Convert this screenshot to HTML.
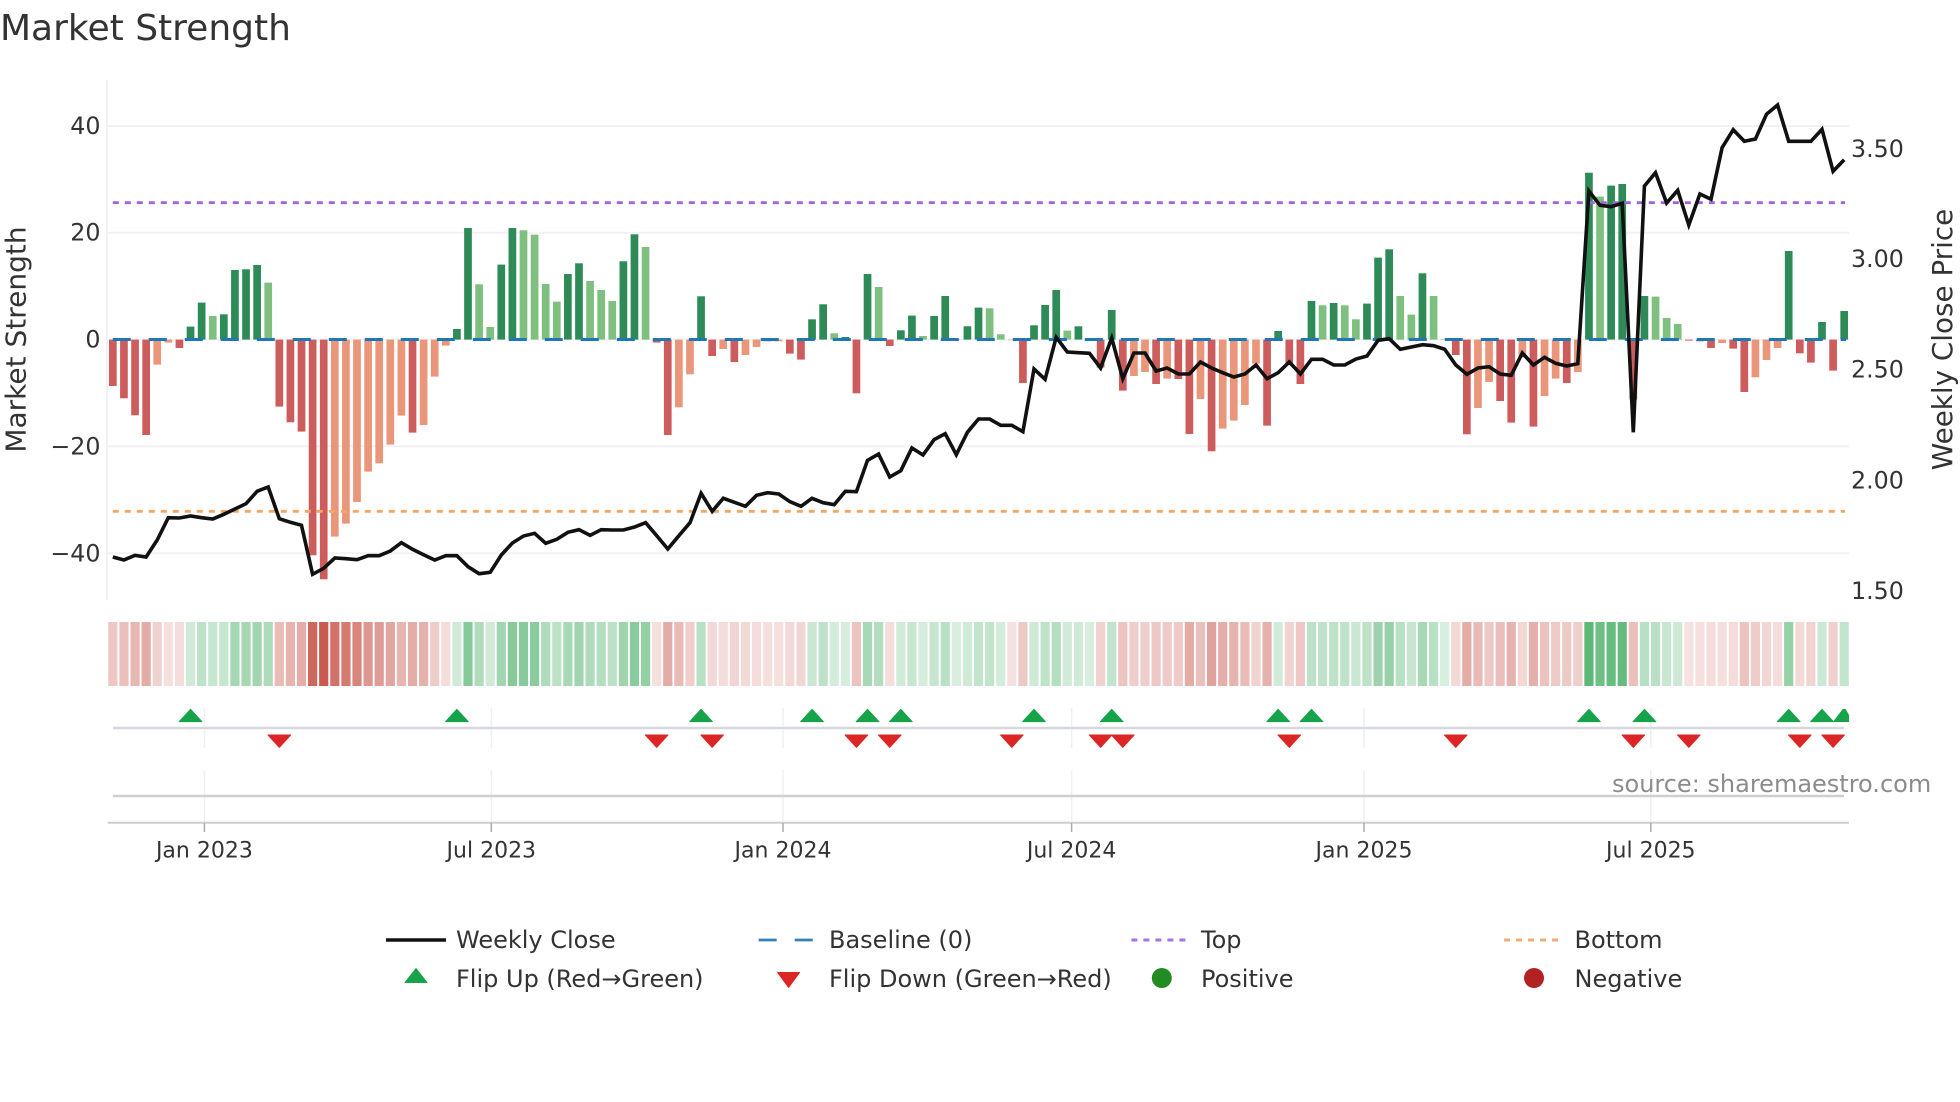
<!DOCTYPE html>
<html lang="en">
<head>
<meta charset="utf-8">
<title>Market Strength</title>
<style>
html,body{margin:0;padding:0;background:#fff;width:1960px;height:1102px;overflow:hidden}
svg{display:block}
text{font-family:"DejaVu Sans","Liberation Sans",sans-serif;fill:#333}
</style>
</head>
<body>
<svg xmlns="http://www.w3.org/2000/svg" width="1960" height="1102" viewBox="0 0 1960 1102">
<rect width="1960" height="1102" fill="#fff"/>
<text x="0" y="40" font-size="36">Market Strength</text>

<g stroke="#f1f2f5" stroke-width="2">
<line x1="107" y1="80" x2="107" y2="600"/>
<line x1="108" y1="126" x2="1849" y2="126"/>
<line x1="108" y1="232.7" x2="1849" y2="232.7"/>
<line x1="108" y1="339.5" x2="1849" y2="339.5"/>
<line x1="108" y1="446.3" x2="1849" y2="446.3"/>
<line x1="108" y1="553.3" x2="1849" y2="553.3"/>
</g>

<g id="bars"></g>

<line x1="112.8" y1="339.5" x2="1846" y2="339.5" stroke="#1f77b4" stroke-width="3" stroke-dasharray="18 18"/>
<line x1="112.8" y1="202.7" x2="1845" y2="202.7" stroke="#a066dd" stroke-width="2.8" stroke-dasharray="6 6"/>
<line x1="112.8" y1="511.3" x2="1845" y2="511.3" stroke="#f2a765" stroke-width="2.8" stroke-dasharray="6 6"/>
<polyline id="close" fill="none" stroke="#111" stroke-width="3.6" stroke-linejoin="miter" points=""/>

<g font-size="23.75" text-anchor="end">
<text x="100.5" y="134">40</text>
<text x="100.5" y="240.7">20</text>
<text x="100.5" y="347.5">0</text>
<text x="100.5" y="454.3">−20</text>
<text x="100.5" y="561.5">−40</text>
</g>
<g font-size="23.75">
<text x="1851" y="156.8">3.50</text>
<text x="1851" y="267">3.00</text>
<text x="1851" y="377.5">2.50</text>
<text x="1851" y="488.5">2.00</text>
<text x="1851" y="599.2">1.50</text>
</g>
<text transform="translate(25.5 339.5) rotate(-90)" font-size="28" text-anchor="middle">Market Strength</text>
<text transform="translate(1952.2 339.5) rotate(-90)" font-size="27.8" text-anchor="middle">Weekly Close Price</text>

<g id="heat"></g>

<g stroke="#eef0f5" stroke-width="1.5">
<line x1="204.4" y1="708" x2="204.4" y2="748"/><line x1="204.4" y1="770" x2="204.4" y2="822"/>
<line x1="491.3" y1="708" x2="491.3" y2="748"/><line x1="491.3" y1="770" x2="491.3" y2="822"/>
<line x1="783" y1="708" x2="783" y2="748"/><line x1="783" y1="770" x2="783" y2="822"/>
<line x1="1071.6" y1="708" x2="1071.6" y2="748"/><line x1="1071.6" y1="770" x2="1071.6" y2="822"/>
<line x1="1364" y1="708" x2="1364" y2="748"/><line x1="1364" y1="770" x2="1364" y2="822"/>
<line x1="1650.8" y1="708" x2="1650.8" y2="748"/><line x1="1650.8" y1="770" x2="1650.8" y2="822"/>
</g>
<line x1="112.8" y1="728" x2="1844" y2="728" stroke="#d6d8de" stroke-width="2.4"/>
<line x1="112.8" y1="796" x2="1844" y2="796" stroke="#cfcfcf" stroke-width="2.4"/>
<line x1="107.8" y1="822.7" x2="1849" y2="822.7" stroke="#cdcdcd" stroke-width="2"/>
<g stroke="#aaa" stroke-width="1.5">
<line x1="204.4" y1="823" x2="204.4" y2="832"/>
<line x1="491.3" y1="823" x2="491.3" y2="832"/>
<line x1="783" y1="823" x2="783" y2="832"/>
<line x1="1071.6" y1="823" x2="1071.6" y2="832"/>
<line x1="1364" y1="823" x2="1364" y2="832"/>
<line x1="1650.8" y1="823" x2="1650.8" y2="832"/>
</g>
<g id="flips"></g>

<text x="1612" y="792" font-size="24" style="fill:#8c8c8c">source: sharemaestro.com</text>

<g font-size="22" text-anchor="middle">
<text x="204.4" y="857.5">Jan 2023</text>
<text x="491.3" y="857.5">Jul 2023</text>
<text x="783" y="857.5">Jan 2024</text>
<text x="1071.6" y="857.5">Jul 2024</text>
<text x="1364" y="857.5">Jan 2025</text>
<text x="1650.8" y="857.5">Jul 2025</text>
</g>

<line x1="386" y1="940" x2="446" y2="940" stroke="#111" stroke-width="3.6"/>
<line x1="758.7" y1="940" x2="813" y2="940" stroke="#3581b5" stroke-width="2.8" stroke-dasharray="18 18"/>
<line x1="1131.4" y1="940" x2="1186" y2="940" stroke="#a873e2" stroke-width="3" stroke-dasharray="6 6"/>
<line x1="1504" y1="940" x2="1558.6" y2="940" stroke="#f0ad78" stroke-width="3" stroke-dasharray="6 6"/>
<polygon points="416,968.5 427,982.5 405,982.5" fill="#16a34a" stroke="#16a34a" stroke-linejoin="round"/>
<polygon points="777.6,972.5 799.6,972.5 788.6,987.5" fill="#dc2626" stroke="#dc2626" stroke-linejoin="round"/>
<circle cx="1161.8" cy="978" r="10" fill="#228b22"/>
<circle cx="1534" cy="978" r="10" fill="#b22222"/>
<g font-size="24">
<text x="456" y="948">Weekly Close</text>
<text x="829" y="948">Baseline (0)</text>
<text x="1201" y="948">Top</text>
<text x="1574.5" y="948">Bottom</text>
<text x="456" y="987">Flip Up (Red→Green)</text>
<text x="829" y="987">Flip Down (Green→Red)</text>
<text x="1201" y="987">Positive</text>
<text x="1574.5" y="987">Negative</text>
</g>
</svg>
<script>
(function(){
var T="R46.4 R58.7 R75.7 R95.4 O25 O3 R8.4 D13 D37 L23.6 D25.3 D69.6 D70.3 D74.6 L57 R67 R82.7 R92 R215.7 R239.7 O197 O184 O162.4 O132 O123.7 O105 O76 R93 O85.4 O37 O6 D10.6 D111.6 L55.3 L12.6 D75 D111.6 L109.3 L104.9 L55.6 L38 D65.6 D76.3 L58.6 L49.6 L38.6 D78.3 D105.3 L92.6 R3 R95.4 O67.7 O34.7 D43.3 R16.4 O9.4 R22.4 O15.4 O7.4 R1.7 O1.7 R14 R20 D20.3 D35.3 L6.3 D2.6 R53.7 D65.6 L52.6 R6.4 D9.3 D24 L3.6 D23.6 D43.6 L0.5 D13.3 D32 L31.3 L5.3 O0.5 R43.4 D14.3 D34.6 D49.6 L9 D13.3 L0.5 R28 D29.6 R51 O36.4 O32.4 R44.4 O39 R39.4 R94.4 O59.4 R111.7 O89 O81 O65.4 O24 R86 D8.6 R24 R44.4 D38.6 L34.3 D36.6 L34.3 L20.3 D36 D82 D90.3 L43.6 L25 D66.3 L43.6 L0.5 R15.4 R94.7 O68.4 O42.4 R61.4 R83 O18 R87 O56.4 O39 R43.4 O32.4 D166.9 L143 D154 D155.6 R60 D43.6 L43 L21.6 L15.6 R1 R1.7 R8.4 O3.4 R9 R52.4 O37.7 O20.4 O8.4 D88.6 R13.7 R23 D17.6 R31 D28.6".split(" ");
var C=[557,560,555.3,557,540,517.7,518,516,517.7,519,514.3,509,503.7,491.3,487,518.7,522.3,525.3,574.3,568.3,558,558.7,559.7,555.7,555.7,551,542.7,549.3,554.7,560,555.7,555.7,566.7,573.7,572.3,555,543,536,533.3,543.3,539.3,532.3,529.7,535.3,529.7,530,530,527,522.7,535.7,549,535.7,522.7,493.3,511.3,498.3,502.3,506.3,495.3,492.7,494,501.7,506.3,498.3,502.7,504.7,491.3,491.7,460.3,454,477,470.7,448,455,439.7,433.7,454.7,432.3,419,419,425.3,425.3,431.7,369,379.3,337.3,352,352.7,353.3,368,338,378.7,353,353,371,368,374,374,362,368,372.7,377,374,365,378.7,372.7,362,374,359.3,359.3,365,365,359,356,340.3,338.7,349.3,347,344.7,345.7,349.3,365,374.3,368,366.7,374,375.3,353,365,357.3,363.3,366,363.7,191,205.3,206.7,203.3,432.3,186,172.7,203,190.3,225,194,199.3,147.7,129.7,141.3,139,114.3,105,141.3,141.3,141.3,129.3,171.3,159.7];
var col={R:"#cd5c5c",O:"#e9967a",D:"#2e8b57",L:"#7fbf7f"},y0=339.6,p=(1844.2-112.85)/156,b="",h="",pts=[];
function X(i){return 112.85+p*i}
function mix(c,a){return "rgb("+c.map(function(v){return Math.round(255-(255-v)*a)}).join(",")+")"}
T.forEach(function(t,i){
 var k=t[0],v=parseFloat(t.slice(1)),neg=(k=="R"||k=="O"),x=X(i);
 b+='<rect x="'+(x-3.85).toFixed(2)+'" y="'+(neg?y0:y0-v).toFixed(2)+'" width="7.7" height="'+v+'" fill="'+col[k]+'"/>';
 var a=0.18+0.82*Math.min(v/240,1);
 h+='<rect x="'+(x-4.6).toFixed(2)+'" y="622" width="9.2" height="64" fill="'+mix(neg?[200,90,80]:[40,160,75],a)+'"/>';
 pts.push(x.toFixed(1)+","+C[i]);
});
document.getElementById("bars").innerHTML=b;
document.getElementById("heat").innerHTML=h;
document.getElementById("close").setAttribute("points",pts.join(" "));
var f="",U=[7,31,53,63,68,71,83,90,105,108,133,138,151,154,156],D=[15,49,54,67,70,81,89,91,106,121,137,142,152,155];
U.forEach(function(i){var x=X(i),r=Math.min(x+11.3,1849);
 if(x+11.3>1849){f+='<polygon points="'+(x-11.3)+',722 '+(x-1.5)+',709 '+(x+1.5)+',709 1849,715 1849,722" fill="#16a34a"/>';}
 else f+='<polygon points="'+x+',709.3 '+r+',721.6 '+(x-11.3)+',721.6" fill="#16a34a" stroke="#16a34a" stroke-width="1" stroke-linejoin="round"/>';});
D.forEach(function(i){var x=X(i);
 f+='<polygon points="'+(x-11.3)+',735 '+(x+11.3)+',735 '+x+',747.4" fill="#dc2626" stroke="#dc2626" stroke-width="1" stroke-linejoin="round"/>';});
document.getElementById("flips").innerHTML=f;
})();
</script>
</body>
</html>
